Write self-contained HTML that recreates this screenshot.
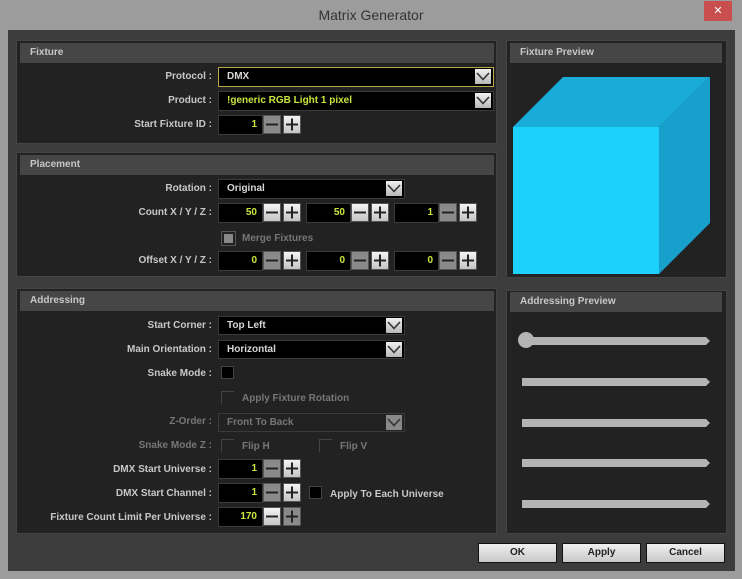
<!DOCTYPE html>
<html><head><meta charset="utf-8"><style>
*{box-sizing:border-box;margin:0;padding:0}
body{width:742px;height:579px;background:#9c9c9c;font-family:"Liberation Sans",sans-serif;position:relative;overflow:hidden;font-size:10px;font-weight:bold}
.a{position:absolute}
.title{left:0;top:7px;width:742px;text-align:center;font-size:14px;font-weight:normal;color:#333}
.close{left:704px;top:1px;width:28px;height:20px;background:#c94e4e;color:#fff;text-align:center;font-size:11px;line-height:20px;font-weight:normal}
.inner{left:8px;top:30px;width:727px;height:541px;background:#3c3c3c}
.panel{background:#222;border:1px solid #444}
.hdr{background:#464646;color:#c8c8c8;font-size:10px;padding-left:10px;line-height:20px;height:20px}
.lbl{color:#c8c8c8;text-align:right;width:200px;left:12px}
.dis{color:#777}
.dd{background:#000;border:1px solid #3a3a3a;color:#d8d8d8;padding-left:8px;line-height:18px}
.dd .ar{position:absolute;right:2px;top:1px;width:16px;height:15px;background:linear-gradient(#f0f0f0,#b8b8b8)}
.num{background:#000;border:1px solid #3a3a3a;color:#c8e63c;text-align:right;padding-right:5px;line-height:18px;width:45px;height:20px}
.btn{width:18px;height:19px;background:linear-gradient(#f4f4f4,#c4c4c4);border:1px solid #555}
.btn.g{background:#8a8a8a}
.btn svg,.ar svg{display:block}
.cb{width:13px;height:13px;background:#000;border:1px solid #444}
.cbd{width:13px;height:13px;border-left:1px solid #444;border-top:1px solid #444}
.pb{width:79px;height:20px;background:linear-gradient(#f0f0f0,#c8c8c8);border:1px solid #111;color:#222;text-align:center;line-height:18px;font-size:10px}
</style></head><body>
<div class="a title">Matrix Generator</div>
<div class="a close">✕</div>
<div class="a inner"></div>

<div class="a panel" style="left:16px;top:40px;width:481px;height:104px"></div>
<div class="a hdr" style="left:20px;top:43px;width:474px">Fixture</div>
<div class="a lbl" style="top:71px">Protocol :</div>
<div class="a dd" style="left:218px;top:67px;width:276px;height:20px;border-color:#b8a84a">DMX<div class="ar"></div></div>
<div class="a lbl" style="top:95px">Product :</div>
<div class="a dd" style="left:218px;top:91px;width:276px;height:20px;color:#c8e63c">!generic RGB Light 1 pixel<div class="ar"></div></div>
<div class="a lbl" style="top:119px">Start Fixture ID :</div>

<div class="a panel" style="left:16px;top:152px;width:481px;height:125px"></div>
<div class="a hdr" style="left:20px;top:155px;width:474px">Placement</div>
<div class="a lbl" style="top:183px">Rotation :</div>
<div class="a dd" style="left:218px;top:179px;width:187px;height:20px">Original<div class="ar"></div></div>
<div class="a lbl" style="top:207px">Count X / Y / Z :</div>
<div class="a cb" style="left:222px;top:232px;background:#888;border:2px solid #222;outline:1px solid #555"></div>
<div class="a dis" style="left:242px;top:233px">Merge Fixtures</div>
<div class="a lbl" style="top:255px">Offset X / Y / Z :</div>

<div class="a panel" style="left:16px;top:288px;width:481px;height:246px"></div>
<div class="a hdr" style="left:20px;top:291px;width:474px">Addressing</div>
<div class="a lbl" style="top:320px">Start Corner :</div>
<div class="a dd" style="left:218px;top:316px;width:187px;height:19px">Top Left<div class="ar"></div></div>
<div class="a lbl" style="top:344px">Main Orientation :</div>
<div class="a dd" style="left:218px;top:340px;width:187px;height:19px">Horizontal<div class="ar"></div></div>
<div class="a lbl" style="top:368px">Snake Mode :</div>
<div class="a cb" style="left:221px;top:366px"></div>
<div class="a cbd" style="left:221px;top:391px"></div>
<div class="a dis" style="left:242px;top:393px">Apply Fixture Rotation</div>
<div class="a lbl dis" style="top:416px">Z-Order :</div>
<div class="a dd" style="left:218px;top:413px;width:187px;height:19px;background:#222;color:#777">Front To Back<div class="ar g" style="background:#888"></div></div>
<div class="a lbl dis" style="top:440px">Snake Mode Z :</div>
<div class="a cbd" style="left:221px;top:439px"></div>
<div class="a dis" style="left:242px;top:441px">Flip H</div>
<div class="a cbd" style="left:319px;top:439px"></div>
<div class="a dis" style="left:340px;top:441px">Flip V</div>
<div class="a lbl" style="top:464px">DMX Start Universe :</div>
<div class="a lbl" style="top:488px">DMX Start Channel :</div>
<div class="a cb" style="left:309px;top:486px"></div>
<div class="a" style="left:330px;top:489px;color:#c8c8c8">Apply To Each Universe</div>
<div class="a lbl" style="top:512px">Fixture Count Limit Per Universe :</div>

<div class="a panel" style="left:506px;top:40px;width:221px;height:238px"></div>
<div class="a hdr" style="left:510px;top:43px;width:212px">Fixture Preview</div>
<svg class="a" style="left:0;top:0" width="742" height="579">
<polygon points="513,127 563,77 710,77 659,127" fill="#19acd9"/>
<polygon points="659,127 710,77 710,223 659,274" fill="#17a0cc"/>
<rect x="513" y="127" width="146" height="147" fill="#1cd2fd"/>
</svg>

<div class="a panel" style="left:506px;top:290px;width:221px;height:244px"></div>
<div class="a hdr" style="left:510px;top:292px;width:212px">Addressing Preview</div>
<svg class="a" style="left:0;top:0" width="742" height="579">
<g fill="#b4b4b4">
<circle cx="526" cy="340" r="8"/>
<polygon points="526,337 706,337 710,341 706,345 526,345"/>
<polygon points="522,378 706,378 710,382 706,386 522,386"/>
<polygon points="522,419 706,419 710,423 706,427 522,427"/>
<polygon points="522,459 706,459 710,463 706,467 522,467"/>
<polygon points="522,500 706,500 710,504 706,508 522,508"/>
</g>
</svg>

<div class="a pb" style="left:478px;top:543px">OK</div>
<div class="a pb" style="left:562px;top:543px">Apply</div>
<div class="a pb" style="left:646px;top:543px">Cancel</div>

<div id="spins"></div>
<script>
var chev='<svg width="16" height="15"><path d="M2 4 L8 10.5 L14 4" fill="none" stroke="#333" stroke-width="1.6"/></svg>';
document.querySelectorAll('.ar').forEach(function(e){e.innerHTML=chev;});
var s=[[218,115,'1',1],[218,203,'50',0],[306,203,'50',0],[394,203,'1',1],[218,251,'0',1],[306,251,'0',1],[394,251,'0',1],[218,459,'1',1],[218,483,'1',1],[218,507,'170',2]];
var h='';
var minus='<svg width="16" height="17"><rect x="2" y="7.5" width="12" height="2" fill="#222"/></svg>';
var plus='<svg width="16" height="17"><rect x="2" y="7.5" width="12" height="2" fill="#222"/><rect x="7" y="2.5" width="2" height="12" fill="#222"/></svg>';
s.forEach(function(r){
h+='<div class="a num" style="left:'+r[0]+'px;top:'+r[1]+'px">'+r[2]+'</div>';
h+='<div class="a btn'+(r[3]==1?' g':'')+'" style="left:'+(r[0]+45)+'px;top:'+r[1]+'px">'+minus+'</div>';
h+='<div class="a btn'+(r[3]==2?' g':'')+'" style="left:'+(r[0]+65)+'px;top:'+r[1]+'px">'+plus+'</div>';
});
document.getElementById('spins').innerHTML=h;
</script>
</body></html>
